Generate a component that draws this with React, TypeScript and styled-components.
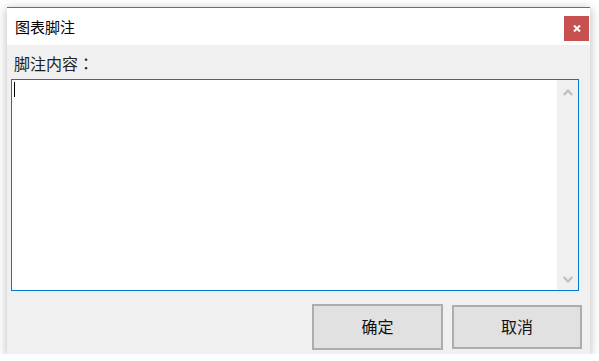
import React from "react";
import styled, { createGlobalStyle } from "styled-components";

const GlobalStyle = createGlobalStyle`
  html, body {
    margin: 0;
    padding: 0;
    background: #ffffff;
  }
  body {
    font-family: "Noto Sans CJK SC", "Microsoft YaHei", sans-serif;
  }
`;

const Window = styled.div`
  box-sizing: border-box;
  width: 583px;
  height: 347px;
  margin: 7px 0 0 7px;
  display: flex;
  flex-direction: column;
  background: #f0f0f0;
  border-top: 1px solid #6e6e6e;
  box-shadow: 0 2px 9px 1px rgba(0, 0, 0, 0.24);
`;

const TitleBar = styled.div`
  height: 37px;
  flex: none;
  display: flex;
  align-items: flex-start;
  background: #ffffff;
`;

const Title = styled.div`
  flex: 1;
  padding-left: 8px;
  font-size: 15px;
  line-height: 37px;
  color: #000;
`;

const CloseButton = styled.div`
  width: 25px;
  height: 25px;
  margin: 8px 1px 0 0;
  background: #c75050;
  display: flex;
  align-items: center;
  justify-content: center;
`;

const Body = styled.div`
  flex: 1;
  display: flex;
  flex-direction: column;
  padding: 8px 8px 4px 4px;
`;

const Label = styled.div`
  font-size: 16px;
  line-height: 20px;
  height: 20px;
  color: #222;
  padding-left: 3px;
`;

const Colon = styled.span`
  font-family: "Noto Sans CJK JP", sans-serif;
`;

const TextBox = styled.div`
  box-sizing: border-box;
  width: 568px;
  height: 212px;
  margin-top: 6px;
  border: 1px solid #0078d7;
  background: #ffffff;
  display: flex;
`;

const TextArea = styled.div`
  flex: 1;
  padding: 2px 0 0 2px;
`;

const Caret = styled.div`
  width: 1px;
  height: 15px;
  background: #000;
`;

const ScrollBar = styled.div`
  width: 21px;
  flex: none;
  background: #f0f0f0;
  display: flex;
  flex-direction: column;
  justify-content: space-between;
  align-items: center;
  padding: 9px 0 7px;
  box-sizing: border-box;
`;

const Footer = styled.div`
  margin-top: 13px;
  display: flex;
  justify-content: flex-end;
  align-items: center;
  gap: 9px;
`;

const Button = styled.div<{ $primary?: boolean }>`
  box-sizing: border-box;
  width: ${(p) => (p.$primary ? 131 : 130)}px;
  height: ${(p) => (p.$primary ? 46 : 44)}px;
  background: #e1e1e1;
  border: 2px solid #adadad;
  display: flex;
  align-items: center;
  justify-content: center;
  font-size: 16px;
  color: #111;
  padding-bottom: 2px;
`;

const Chevron = ({ up }: { up?: boolean }) => (
  <svg width="10" height="7" viewBox="0 0 10 7">
    <path
      d={up ? "M0.8 6 L5 1.6 L9.2 6" : "M0.8 1 L5 5.4 L9.2 1"}
      fill="none"
      stroke="#bebebe"
      strokeWidth="2.2"
    />
  </svg>
);

export default function App() {
  return (
    <>
      <GlobalStyle />
      <Window>
        <TitleBar>
          <Title>图表脚注</Title>
          <CloseButton>
            <svg width="8" height="7" viewBox="0 0 8 7">
              <path d="M1 0.5 L7 6.5 M7 0.5 L1 6.5" stroke="#fff" strokeWidth="2" />
            </svg>
          </CloseButton>
        </TitleBar>
        <Body>
          <Label>
            脚注内容<Colon>：</Colon>
          </Label>
          <TextBox>
            <TextArea>
              <Caret />
            </TextArea>
            <ScrollBar>
              <Chevron up />
              <Chevron />
            </ScrollBar>
          </TextBox>
          <Footer>
            <Button $primary>确定</Button>
            <Button>取消</Button>
          </Footer>
        </Body>
      </Window>
    </>
  );
}
